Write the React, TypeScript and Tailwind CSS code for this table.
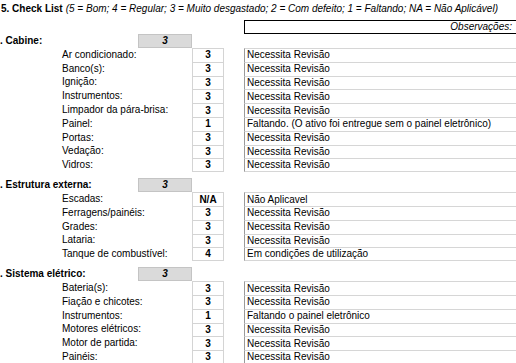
const sections = [
  {
    title: ". Cabine:",
    score: "3",
    items: [
      ["Ar condicionado:", "3", "Necessita Revisão"],
      ["Banco(s):", "3", "Necessita Revisão"],
      ["Ignição:", "3", "Necessita Revisão"],
      ["Instrumentos:", "3", "Necessita Revisão"],
      ["Limpador da pára-brisa:", "3", "Necessita Revisão"],
      ["Painel:", "1", "Faltando. (O ativo foi entregue sem o painel eletrônico)"],
      ["Portas:", "3", "Necessita Revisão"],
      ["Vedação:", "3", "Necessita Revisão"],
      ["Vidros:", "3", "Necessita Revisão"],
    ],
  },
  {
    title: ". Estrutura externa:",
    score: "3",
    items: [
      ["Escadas:", "N/A", "Não Aplicavel"],
      ["Ferragens/painéis:", "3", "Necessita Revisão"],
      ["Grades:", "3", "Necessita Revisão"],
      ["Lataria:", "3", "Necessita Revisão"],
      ["Tanque de combustível:", "4", "Em condições de utilização"],
    ],
  },
  {
    title: ". Sistema elétrico:",
    score: "3",
    items: [
      ["Bateria(s):", "3", "Necessita Revisão"],
      ["Fiação e chicotes:", "3", "Necessita Revisão"],
      ["Instrumentos:", "1", "Faltando o painel eletrônico"],
      ["Motores elétricos:", "3", "Necessita Revisão"],
      ["Motor de partida:", "3", "Necessita Revisão"],
      ["Painéis:", "3", "Necessita Revisão"],
    ],
  },
];

function Section({ title, score, items }: (typeof sections)[number]) {
  return (
    <div className="flex flex-col">
      <div className="flex h-[14px] items-center">
        <div className="w-[138px] font-bold">{title}</div>
        <div className="flex h-full w-[54px] items-center justify-center border border-[#c4c4c4] bg-[#dadada] font-bold italic">
          {score}
        </div>
      </div>
      {items.map(([label, value, note], i) => (
        <div key={label} className="flex h-[13.8px] items-stretch">
          <div className="flex w-[192px] items-center pl-[62px]">{label}</div>
          <div
            className={`flex w-[32px] items-center justify-center border-x border-t border-[#d4d4d4] font-bold ${
              i === items.length - 1 ? "border-b" : ""
            }`}
          >
            {value}
          </div>
          <div className="w-[20px]" />
          <div
            className={`flex flex-1 items-center border-t border-l border-t-[#d6d6d6] border-l-[#9a9a9a] pl-[2px] ${
              i === items.length - 1 ? "border-b border-b-[#d6d6d6]" : ""
            }`}
          >
            {note}
          </div>
        </div>
      ))}
    </div>
  );
}

export default function App() {
  return (
    <div
      className="h-[363px] w-[516px] overflow-hidden bg-white text-[10px] leading-none text-black"
      style={{ fontFamily: '"Liberation Sans", Arial, sans-serif' }}
    >
      <div className="flex h-[16px] items-center pl-[1px] pt-[1px]">
        <span className="font-bold">5. Check List</span>
        <span className="ml-[3px] italic">
          (5 = Bom; 4 = Regular; 3 = Muito desgastado; 2 = Com defeito; 1 = Faltando; NA = Não Aplicável)
        </span>
      </div>
      <div className="mt-[4px] flex h-[14px]">
        <div className="w-[244px]" />
        <div className="flex flex-1 items-center justify-end border border-r-0 border-black pr-[4px] italic">
          Observações:
        </div>
      </div>
      <div className="flex flex-col gap-[6px]">
        {sections.map((s) => (
          <Section key={s.title} {...s} />
        ))}
      </div>
    </div>
  );
}
